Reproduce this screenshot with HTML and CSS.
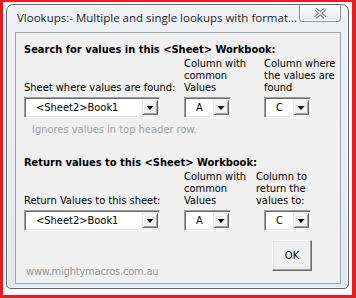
FILE: index.html
```html
<!DOCTYPE html>
<html>
<head>
<meta charset="utf-8">
<link rel="stylesheet" href="styles.css">
</head>
<body>
<div class="shot">
  <div class="window">
    <div class="titlebar">
      <span class="title">Vlookups:- Multiple and single lookups with format...</span>
      <div class="close">
        <svg width="41" height="17" viewBox="0 0 41 17">
          <path d="M15.5 4 L25 12.5 M25 4 L15.5 12.5" stroke="#737880" stroke-width="3.4" fill="none"/>
          <path d="M15.5 4 L25 12.5 M25 4 L15.5 12.5" stroke="#ffffff" stroke-width="1.4" fill="none"/>
        </svg>
      </div>
    </div>
    <div class="client">
      <section class="group">
        <h2 class="heading">Search for values in this &lt;Sheet&gt; Workbook:</h2>
        <div class="grid">
          <div class="lbl">Sheet where values are found:</div>
          <div class="lbl">Column with<br>common<br>Values</div>
          <div class="lbl">Column where<br>the values are<br>found</div>
          <div class="combo wide"><span class="val">&lt;Sheet2&gt;Book1</span><span class="drop"><i class="arrow"></i></span></div>
          <div class="combo small"><span class="val">A</span><span class="drop"><i class="arrow"></i></span></div>
          <div class="combo small"><span class="val">C</span><span class="drop"><i class="arrow"></i></span></div>
        </div>
        <p class="hint">Ignores values in top header row.</p>
      </section>
      <section class="group second">
        <h2 class="heading">Return values to this &lt;Sheet&gt; Workbook:</h2>
        <div class="grid">
          <div class="lbl">Return Values to this sheet:</div>
          <div class="lbl">Column with<br>common<br>Values</div>
          <div class="lbl shift">Column to<br>return the<br>values to:</div>
          <div class="combo wide"><span class="val">&lt;Sheet2&gt;Book1</span><span class="drop"><i class="arrow"></i></span></div>
          <div class="combo small"><span class="val">A</span><span class="drop"><i class="arrow"></i></span></div>
          <div class="combo small"><span class="val">C</span><span class="drop"><i class="arrow"></i></span></div>
        </div>
      </section>
      <div class="bottom">
        <span class="site">www.mightymacros.com.au</span>
        <button class="ok">OK</button>
      </div>
    </div>
  </div>
</div>
</body>
</html>
```
FILE: styles.css
```css
* { box-sizing: border-box; }
body { margin: 0; background: #fff; }

.shot {
  width: 356px;
  height: 298px;
  border: solid #ea1a22;
  border-width: 2px 4px 3px 3px;
  padding: 2px 3px 6px 3px;
  background: #fff;
}

.window {
  height: 100%;
  display: flex;
  flex-direction: column;
  border: 1px solid #62666c;
  border-radius: 7px 7px 5px 5px;
  background: linear-gradient(#eff2f5, #e2e7ed);
  box-shadow: inset 1px 1px 0 #fbfcfd, inset -1px -1px 0 #f7f8fa;
  padding: 0 7px 4px 8px;
}

.titlebar {
  flex: none;
  height: 27px;
  display: flex;
  align-items: flex-start;
}

.title {
  flex: 1;
  padding-left: 2px;
  font-family: "Open Sans", "Noto Sans", sans-serif;
  font-size: 11.5px;
  line-height: 26px;
  color: #1e1e1e;
  white-space: nowrap;
  overflow: hidden;
}

.close {
  flex: none;
  width: 42px;
  height: 18px;
  margin-top: -1px;
  border: 1px solid #8e939a;
  border-top-color: #62666c;
  border-radius: 0 0 4px 4px;
  background: linear-gradient(#fafbfc, #e6e9ee);
  box-shadow: inset 1px 0 0 #fff, inset -1px -1px 0 #fff;
}
.close svg { display: block; }

.client {
  flex: 1;
  border: 1px solid #9aa4af;
  background: #f0f0f0;
  padding: 10px 0 0 8px;
  display: flex;
  flex-direction: column;
  font-family: "DejaVu Sans Condensed", "DejaVu Sans", sans-serif;
  font-size: 11px;
  color: #000;
}

.heading {
  margin: 0;
  font-size: 11px;
  font-weight: bold;
  line-height: 13px;
}

.second .heading { margin-top: 20px; }

.grid {
  margin-top: 2px;
  display: grid;
  grid-template-columns: 160px 80px 1fr;
  row-gap: 3px;
  align-items: end;
}

.lbl {
  line-height: 12px;
  white-space: nowrap;
}
.lbl.shift { margin-left: -8px; }

.combo {
  height: 21px;
  display: flex;
  align-items: center;
  background: #fff;
  border: 1px solid;
  border-color: #a0a0a0 #ffffff #ffffff #a0a0a0;
  box-shadow: inset 1px 1px 0 #696969, inset -1px -1px 0 #e3e3e3;
}
.combo.wide { width: 136px; }
.combo.small { width: 47px; }

.val {
  flex: 1;
  padding-left: 11px;
  line-height: 13px;
  white-space: nowrap;
}

.drop {
  flex: none;
  width: 16px;
  height: 15px;
  margin-right: 1px;
  background: #f0f0f0;
  border: 1px solid;
  border-color: #e3e3e3 #696969 #696969 #e3e3e3;
  box-shadow: inset 1px 1px 0 #fff, inset -1px -1px 0 #a0a0a0;
  display: flex;
  align-items: center;
  justify-content: center;
  padding-top: 1px;
}

.arrow {
  display: block;
  width: 7px;
  height: 4px;
  background: #000;
  clip-path: polygon(0 0, 100% 0, 50% 100%);
}

.hint {
  margin: 5px 0 0 8px;
  line-height: 13px;
  color: #a0a0a0;
}

.bottom {
  margin-top: 9px;
  display: flex;
  justify-content: space-between;
  align-items: flex-end;
  padding-right: 28px;
}

.site {
  margin-left: 2px;
  line-height: 13px;
  letter-spacing: -0.2px;
  color: #979797;
}

.ok {
  width: 40px;
  height: 31px;
  margin: 0 0 7px 0;
  padding: 0;
  font-family: "DejaVu Sans Condensed", "DejaVu Sans", sans-serif;
  font-size: 11px;
  color: #000;
  background: #f0f0f0;
  border: 1px solid;
  border-color: #ffffff #696969 #696969 #ffffff;
  box-shadow: inset -1px -1px 0 #a0a0a0, inset 1px 1px 0 #e3e3e3;
  border-radius: 0;
}
```
